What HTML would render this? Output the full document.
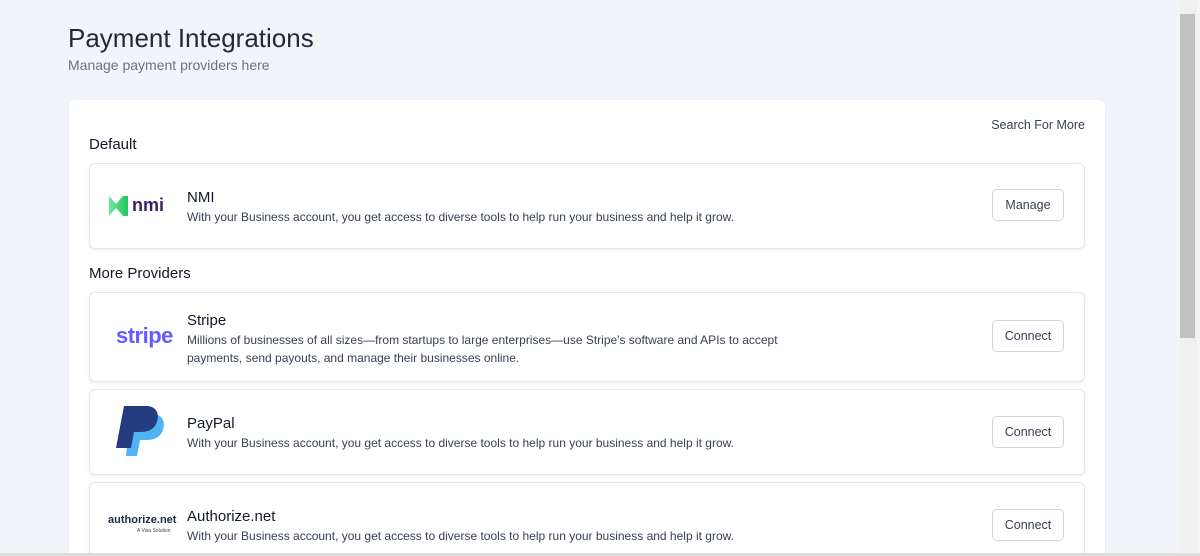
<!DOCTYPE html>
<html style="height:556px;overflow:hidden"><head><meta charset="utf-8"><style>
*{box-sizing:border-box;margin:0;padding:0}
body{width:1200px;height:556px;overflow:hidden;background:#f1f5f9;font-family:"Liberation Sans",sans-serif;color:#111827;position:relative}
h1{position:absolute;left:68px;top:23px;font-size:26px;font-weight:400;color:#1f2937}
.sub{position:absolute;left:68px;top:57px;font-size:14px;color:#6b7280}
.main{position:absolute;left:69px;top:100px;width:1036px;height:456px;overflow:hidden;background:#fff;border-radius:6px 6px 0 0;box-shadow:0 1px 2px rgba(0,0,0,.08)}
.search{position:absolute;right:20px;top:18px;font-size:12.5px;color:#374151}
.sec{position:absolute;left:20px;font-size:15px;color:#111827}
.card{position:absolute;left:20px;width:996px;border:1px solid #e5e7eb;border-radius:6px;box-shadow:0 1px 3px rgba(0,0,0,.08);background:#fff}
.title{position:absolute;left:97px;font-size:15px;color:#111827}
.desc{position:absolute;left:97px;font-size:12px;color:#374151;line-height:18px;width:620px}
.btn{position:absolute;right:20px;width:72px;height:32px;border:1px solid #d1d5db;border-radius:5px;font-size:12.5px;color:#374151;display:flex;align-items:center;justify-content:center;background:#fff}
.logo{position:absolute}
.sb{position:absolute;left:1180px;top:0;width:17px;height:556px;background:#f0f0f0}
.thumb{position:absolute;left:1180px;top:14px;width:15px;height:324px;background:#c1c1c1}
</style></head><body>
<h1>Payment Integrations</h1>
<div class="sub">Manage payment providers here</div>
<div class="main">
<div class="search">Search For More</div>
<div class="sec" style="top:36px">Default</div>
<div class="card" style="top:63px;height:86px">
 <svg class="logo" style="left:18px;top:30px" width="66" height="24" viewBox="0 0 66 24"><defs><linearGradient id="g" x1="0" x2="1"><stop offset="0" stop-color="#6ee7a0"/><stop offset="1" stop-color="#22c55e"/></linearGradient></defs><path d="M1 2 L8 10 L15 2 L20 2 L20 22 L15 22 L8 14 L1 22 Z" fill="url(#g)"/><text x="24" y="17" font-family="Liberation Sans" font-weight="700" font-size="18" fill="#3b1d63">nmi</text></svg>
 <div class="title" style="top:25px">NMI</div>
 <div class="desc" style="top:44px">With your Business account, you get access to diverse tools to help run your business and help it grow.</div>
 <div class="btn" style="top:25px">Manage</div>
</div>
<div class="sec" style="top:165px">More Providers</div>
<div class="card" style="top:192px;height:90px">
 <div class="logo" style="left:26px;top:30px;font-size:22px;font-weight:700;color:#635bff;letter-spacing:-0.5px">stripe</div>
 <div class="title" style="top:19px">Stripe</div>
 <div class="desc" style="top:38px">Millions of businesses of all sizes—from startups to large enterprises—use Stripe's software and APIs to accept payments, send payouts, and manage their businesses online.</div>
 <div class="btn" style="top:27px">Connect</div>
</div>
<div class="card" style="top:289px;height:86px">
 <svg class="logo" style="left:24px;top:14px" width="54" height="56" viewBox="0 0 54 56"><path d="M16 10 L38 10 C50 10 52 20 48 28 C45 34 40 36 32 36 L26 36 L23 52 L12 52 Z" fill="#4fb3f6"/><path d="M10 2 L32 2 C44 2 46 12 42 20 C39 26 34 28 26 28 L20 28 L17 44 L2 44 Z" fill="#253b80"/></svg>
 <div class="title" style="top:25px">PayPal</div>
 <div class="desc" style="top:44px">With your Business account, you get access to diverse tools to help run your business and help it grow.</div>
 <div class="btn" style="top:26px">Connect</div>
</div>
<div class="card" style="top:382px;height:100px">
 <div class="logo" style="left:18px;top:31px;font-size:11px;font-weight:700;color:#1f2a44">authorize.net</div>
 <div class="logo" style="left:47px;top:45px;font-size:5px;color:#444">A Visa Solution</div>
 <div class="title" style="top:25px">Authorize.net</div>
 <div class="desc" style="top:44px">With your Business account, you get access to diverse tools to help run your business and help it grow.</div>
 <div class="btn" style="top:26px">Connect</div>
</div>
</div>
<div class="sb"></div><div class="thumb"></div>
<div style="position:absolute;left:0;top:553px;width:1200px;height:3px;background:#ddd"></div>
</body></html>
